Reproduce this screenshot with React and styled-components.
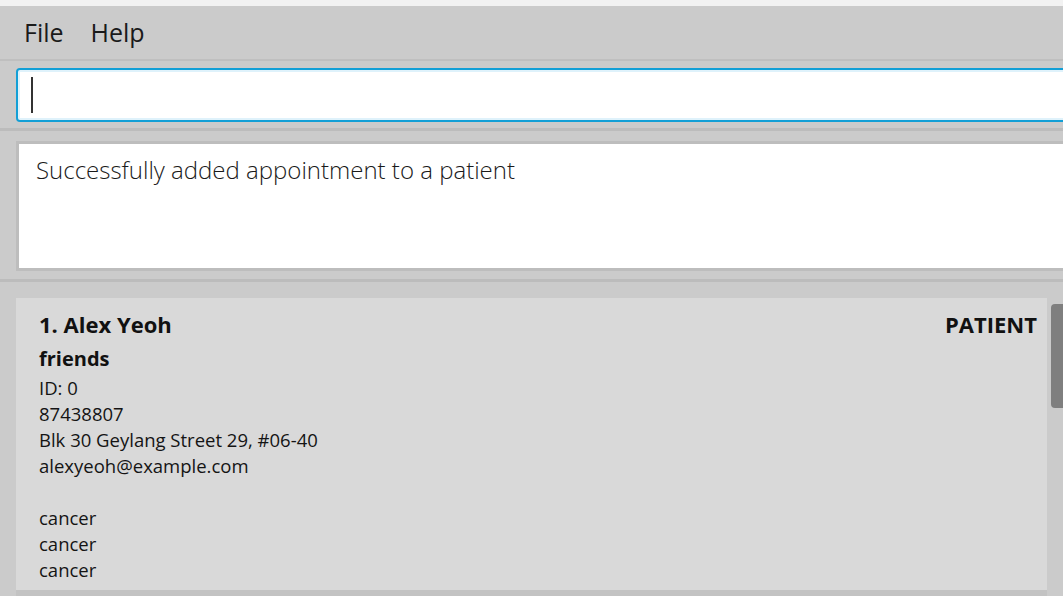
import React from "react";
import styled, { createGlobalStyle } from "styled-components";

const GlobalStyle = createGlobalStyle`
  html, body {
    margin: 0;
    padding: 0;
    background: #cccccc;
  }
  * {
    box-sizing: border-box;
  }
`;

const font = `"Open Sans", "Noto Sans", "Liberation Sans", sans-serif`;

const Window = styled.div`
  width: 1063px;
  height: 596px;
  overflow: hidden;
  display: flex;
  flex-direction: column;
  background: #cccccc;
  font-family: ${font};
  color: #111;
`;

const TitleStrip = styled.div`
  height: 6px;
  flex-shrink: 0;
  background: #f2f2f2;
`;

const MenuBar = styled.div`
  height: 55px;
  flex-shrink: 0;
  display: flex;
  align-items: center;
  gap: 27px;
  padding: 0 0 2px 24px;
  background: #cbcbcb;
  border-bottom: 2px solid #bfbfbf;
`;

const MenuItem = styled.span`
  font-size: 25px;
  font-weight: 400;
  color: #1a1a1a;
`;

const Pane = styled.div`
  flex-shrink: 0;
  padding: ${(p) => p.$pad};
  border-bottom: 3px solid #bcbcbc;
  background: #cbcbcb;
`;

const CommandField = styled.div`
  width: 1070px;
  height: 54px;
  background: #fff;
  border: 2px solid #129fd6;
  border-radius: 4px;
  box-shadow: inset 0 0 0 2px #dff2fb;
  display: flex;
  align-items: center;
  padding-left: 13px;
`;

const Caret = styled.div`
  width: 2px;
  height: 36px;
  background: #333;
`;

const ResultBox = styled.div`
  width: 1070px;
  height: 130px;
  background: #fff;
  border: 3px solid #bdbdbd;
  border-right: none;
  padding: 9px 0 0 17px;
  font-size: 24px;
  font-weight: 300;
  color: #1a1a1a;
`;

const ListArea = styled.div`
  position: relative;
  flex: 1;
  padding: 16px 16px 0 16px;
  background: #cbcbcb;
  overflow: hidden;
`;

const Card = styled.div`
  width: 1031px;
  height: 298px;
  background: #d9d9d9;
  padding: 11px 10px 0 23px;
  border-bottom: 6px solid #c3c3c3;
`;

const CardHeader = styled.div`
  display: flex;
  justify-content: space-between;
  align-items: baseline;
  font-size: 22px;
  font-weight: 700;
  color: #111;
  height: 32px;
`;

const Tag = styled.div`
  font-size: 20px;
  font-weight: 700;
  margin-top: 4px;
  height: 30px;
`;

const Detail = styled.div`
  font-size: 18.5px;
  line-height: 26px;
  min-height: 26px;
  color: #141414;
`;

const ScrollThumb = styled.div`
  position: absolute;
  right: 0;
  top: 22px;
  width: 12px;
  height: 104px;
  background: #7f7f7f;
  border-radius: 4px 0 0 4px;
`;

const person = {
  index: 1,
  name: "Alex Yeoh",
  role: "PATIENT",
  tag: "friends",
  details: [
    "ID: 0",
    "87438807",
    "Blk 30 Geylang Street 29, #06-40",
    "alexyeoh@example.com",
    "",
    "cancer",
    "cancer",
    "cancer",
  ],
};

export default function App() {
  return (
    <>
      <GlobalStyle />
      <Window>
        <TitleStrip />
        <MenuBar>
          <MenuItem>File</MenuItem>
          <MenuItem>Help</MenuItem>
        </MenuBar>
        <Pane $pad="7px 0 6px 16px">
          <CommandField>
            <Caret />
          </CommandField>
        </Pane>
        <Pane $pad="10px 0 8px 16px">
          <ResultBox>Successfully added appointment to a patient</ResultBox>
        </Pane>
        <ListArea>
          <Card>
            <CardHeader>
              <span>
                {person.index}. {person.name}
              </span>
              <span>{person.role}</span>
            </CardHeader>
            <Tag>{person.tag}</Tag>
            {person.details.map((d, i) => (
              <Detail key={i}>{d}</Detail>
            ))}
          </Card>
          <ScrollThumb />
        </ListArea>
      </Window>
    </>
  );
}
